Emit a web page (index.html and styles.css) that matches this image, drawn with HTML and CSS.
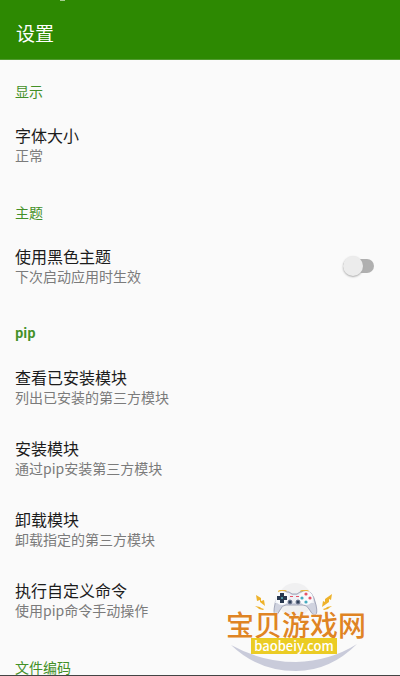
FILE: index.html
```html
<!DOCTYPE html>
<html lang="zh-CN">
<head>
<meta charset="utf-8">
<meta name="viewport" content="width=device-width, initial-scale=1">
<title>设置</title>
<link rel="stylesheet" href="styles.css">
</head>
<body>
<div class="screen">
  <header class="app-bar">
    <span class="status-dot"></span>
    <h1>设置</h1>
  </header>
  <main class="settings">
    <h2>显示</h2>
    <button class="item" type="button"><span class="title">字体大小</span><span class="summary">正常</span></button>
    <h2>主题</h2>
    <label class="item item-switch" for="dark">
      <span class="label"><span class="title">使用黑色主题</span><span class="summary">下次启动应用时生效</span></span>
      <input class="switch" id="dark" type="checkbox" role="switch">
    </label>
    <h2 class="latin">pip</h2>
    <button class="item" type="button"><span class="title">查看已安装模块</span><span class="summary">列出已安装的第三方模块</span></button>
    <button class="item" type="button"><span class="title">安装模块</span><span class="summary">通过pip安装第三方模块</span></button>
    <button class="item" type="button"><span class="title">卸载模块</span><span class="summary">卸载指定的第三方模块</span></button>
    <button class="item" type="button"><span class="title">执行自定义命令</span><span class="summary">使用pip命令手动操作</span></button>
    <h2>文件编码</h2>
  </main>
  <div class="brand">
    <svg class="brand-art" viewBox="0 0 180 101" aria-hidden="true">
      <circle cx="75" cy="25" r="17" fill="#f0f0f1"/>
      <path d="M11 70Q42 87 76 87Q110 86 137 69Q110 96 76 96Q38 96 11 70Z" fill="#c9cbda"/>
      <path d="M58 18v-1q0-2 2-2h5q2 0 2 2v1zM80 18v-1q0-2 2-2h5q2 0 2 2v1z" fill="#e9b73c"/>
      <path d="M58 18q4-2 11-1l3 2h5l3-2q8-1 11 1 3 3 5 12 2 9-1 10-3 0-6-6-2-4-6-4H66q-4 0-6 5-2 5-5 5-2-2 0-11 1-8 3-11Z" fill="#d0d3df" stroke="#a3a7ba"/>
      <path d="M58 19q4-2 11-1l3 2h5l3-2q8-1 11 1 3 5 3 9H55q1-6 3-9Z" fill="#eef0f5"/>
      <circle cx="62" cy="23" r="7" fill="#f9fafc"/>
      <circle cx="86" cy="23" r="7" fill="#f9fafc"/>
      <path d="M60 18h4v3h3v4h-3v3h-4v-3h-3v-4h3z" fill="#28374e"/>
      <circle cx="62" cy="23" r="1" fill="#56b4bd"/>
      <g fill="#e65468"><circle cx="86" cy="19" r="1.6"/><circle cx="90" cy="23" r="1.6"/></g>
      <g fill="#45acc0"><circle cx="82" cy="23" r="1.6"/><circle cx="86" cy="27" r="1.6"/></g>
      <path d="M70 21h3v1h-3zM76 21h3v1h-3z" fill="#e65468"/>
      <g fill="#30415a" stroke="#727a93"><circle cx="70" cy="27" r="2"/><circle cx="78" cy="27" r="2"/></g>
      <g fill="#eeb22b"><path d="M36 20l5 3 0 3 3-1 1 6-5-4 0-2-3 1zM35 31l5 1 1 1 3 1-1 1-4-1-1-1zM112 19l-7 5 0 3-2-1-1 6 7-5 0-3 2 1zM112 31l-5 1-1 1-3 1 1 1 4-1 1-1z"/></g>
    </svg>
    <div class="brand-name">宝贝游戏网</div>
    <div class="brand-url">baobeiy.com</div>
  </div>
</div>
</body>
</html>
```
FILE: styles.css
```css
* { box-sizing: border-box; }

body {
  margin: 0;
  background: #fafafa;
  color: #1c1c1c;
  font-family: "Noto Sans CJK SC", "Noto Sans", sans-serif;
}

.screen {
  position: relative;
  height: 100vh;
  overflow: hidden;
  border-bottom: 1px solid #444;
}

.app-bar {
  position: relative;
  padding: 18px 16px 11px;
  background: #2d8902;
  border-bottom: 1px solid #529b31;
  color: #fff;
}

.status-dot {
  position: absolute;
  top: 0;
  left: 60px;
  width: 5px;
  height: 1px;
  background: #a5cf91;
}

h1 {
  margin: 0;
  font-size: 19px;
  font-weight: 400;
  line-height: 30px;
}

h2 {
  margin: 0;
  padding: 21px 15px 9px;
  color: #439027;
  font-size: 14px;
  font-weight: 400;
  line-height: 20px;
}

.latin {
  font-size: 13px;
  font-weight: 700;
}

.item {
  display: block;
  width: 100%;
  padding: 15px 15px 16px;
  border: 0;
  background: none;
  color: inherit;
  font-family: inherit;
  text-align: left;
}

.item-switch {
  display: flex;
  align-items: center;
  justify-content: space-between;
  padding-right: 26px;
}

.title,
.summary {
  display: block;
  line-height: 20px;
}

.title { font-size: 16px; }

.summary {
  color: #7b7b7b;
  font-size: 14px;
}

.switch {
  appearance: none;
  display: flex;
  align-items: center;
  width: 31px;
  height: 14px;
  margin: 0;
  background: #b0b0b0;
  border-radius: 7px;
}

.switch::before {
  content: "";
  flex: none;
  width: 20px;
  height: 20px;
  border-radius: 50%;
  background: #ececec;
  box-shadow: 0 1px 2px #aaa;
}

.switch:checked { justify-content: flex-end; }

.brand {
  position: absolute;
  right: 0;
  bottom: -1px;
  width: 180px;
  height: 101px;
  padding: 35px 0 0 6px;
}

.brand-art {
  position: absolute;
  inset: 0;
}

.brand-name {
  position: relative;
  color: #df8424;
  font-size: 28px;
  font-weight: 500;
  line-height: 28px;
  white-space: nowrap;
  text-shadow: 0 0 2px #fff;
}

.brand-url {
  position: relative;
  width: 86px;
  margin-left: 25px;
  background: #ebcc24;
  color: #fff;
  font-size: 13px;
  font-weight: 500;
  line-height: 16px;
  text-align: center;
}
```
